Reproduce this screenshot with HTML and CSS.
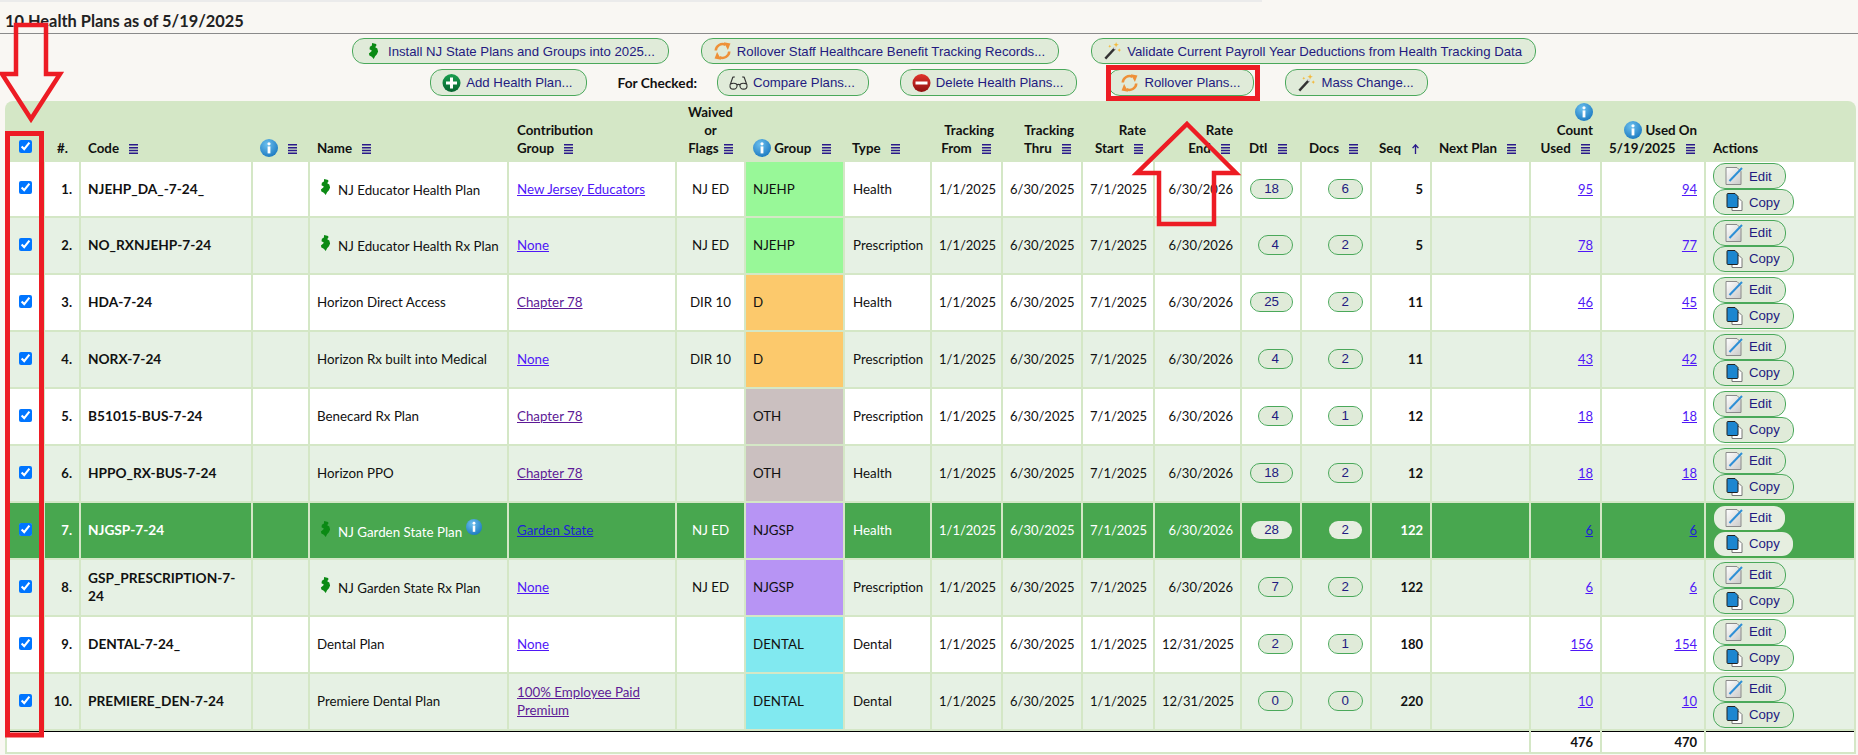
FILE: index.html
```html
<!DOCTYPE html>
<html lang="en">
<head>
<meta charset="utf-8">
<title>Health Plans</title>
<link rel="stylesheet" href="styles.css">
</head>
<body>
<svg class="defs" width="0" height="0" aria-hidden="true">
  <defs>
    <radialGradient id="gInfo" cx="40%" cy="30%" r="75%"><stop offset="0" stop-color="#6cc0ee"/><stop offset="1" stop-color="#1a78c0"/></radialGradient>
    <linearGradient id="gPlus" x1="0" y1="0" x2="0" y2="1"><stop offset="0" stop-color="#19a04f"/><stop offset="1" stop-color="#06622f"/></linearGradient>
    <linearGradient id="gMinus" x1="0" y1="0" x2="0" y2="1"><stop offset="0" stop-color="#e2342c"/><stop offset="1" stop-color="#8e1010"/></linearGradient>
    <linearGradient id="gPage" x1="0" y1="0" x2="1" y2="1"><stop offset="0" stop-color="#fff"/><stop offset="1" stop-color="#c9c9c9"/></linearGradient>
    <symbol id="i-nj" viewBox="0 0 10 16"><path d="M3.600 0 7.600.9 8 2.200 6.700 4.200 8.800 5.600 9.600 8.400 8.400 11.200 6.600 13.200 5.200 16 4 14.600 2.900 13.500.9 12.600.4 10.400 2.800 8.500 3.300 7.400 1 6.200 1.400 3.800 3.400 2.600Z" fill="#0b8a14"/></symbol>
    <symbol id="i-info" viewBox="0 0 18 18"><circle cx="9" cy="9" r="9" fill="url(#gInfo)"/><rect x="7.600" y="7.400" width="2.800" height="7" fill="#fff"/><circle cx="9" cy="4.800" r="1.600" fill="#fff"/></symbol>
    <symbol id="i-menu" viewBox="0 0 9 10"><path d="M0 .8h9M0 3.800h9M0 6.400h9M0 9.200h9" stroke="#2a1a8a" stroke-width="1.500"/></symbol>
    <symbol id="i-up" viewBox="0 0 9 12"><path d="M4.500 12V2M1 5 4.500 1 8 5" fill="none" stroke="#2a1a8a" stroke-width="1.600"/></symbol>
    <symbol id="i-roll" viewBox="0 0 20 20"><g fill="none" stroke="#ee9138" stroke-width="2.800"><path d="M2.500 9.500A7.500 7.500 0 0 1 13.500 3.200"/><path d="M17.500 10.500A7.500 7.500 0 0 1 6.500 16.800"/></g><path d="M11.500.3 18.800 1.800 16 8.800Z" fill="#ee9138"/><path d="M8.500 19.700 1.200 18.200 4 11.200Z" fill="#ee9138"/></symbol>
    <symbol id="i-wand" viewBox="0 0 20 20"><path d="M2 18.500 13 6.500" stroke="#333" stroke-width="2.600"/><path d="M11.800 7.800 13.400 6" stroke="#ddd" stroke-width="2.600"/><path d="M14 0l.8 2.200L17 3l-2.200.8L14 6l-.8-2.200L11 3l2.200-.8ZM17.500 7l.6 1.400 1.400.6-1.400.6-.6 1.400-.6-1.400L15.500 9l1.400-.6ZM7 3l.5 1.200L8.700 4.700 7.500 5.200 7 6.400 6.500 5.200 5.300 4.700 6.500 4.200Z" fill="#f3b93a"/></symbol>
    <symbol id="i-glass" viewBox="0 0 20 15"><g fill="none" stroke="#333" stroke-width="1.200"><path d="M1 10C1 8 3 7.800 5 7.800S8.500 8.500 8.500 10 7.500 14 4.500 14 1 12 1 10ZM19 10C19 8 17 7.800 15 7.800S11.500 8.500 11.500 10 12.500 14 15.500 14 19 12 19 10ZM8.500 9.500C9.500 8.800 10.500 8.800 11.500 9.500M1 10 4 1.500 6 1M19 10 16 1.500 14 1"/></g></symbol>
    <symbol id="i-plus" viewBox="0 0 18 18"><circle cx="9" cy="9" r="9" fill="url(#gPlus)"/><path d="M7.500 3.500h3v4h4v3h-4v4h-3v-4h-4v-3h4Z" fill="#fff"/></symbol>
    <symbol id="i-minus" viewBox="0 0 18 18"><circle cx="9" cy="9" r="9" fill="url(#gMinus)"/><rect x="3" y="7.500" width="12" height="3" fill="#fff"/></symbol>
    <symbol id="i-edit" viewBox="0 0 18 18"><path d="M.5.500h11l4 4v13H.500Z" fill="url(#gPage)" stroke="#8a8a8a"/><path d="M4 14 16.500 1" stroke="#2e8fd6" stroke-width="2"/></symbol>
    <symbol id="i-copy" viewBox="0 0 16 18"><path d="M5.500 5.500h7l3 3v9h-10Z" fill="#fff" stroke="#777"/><path d="M.5 1.500a1 1 0 0 1 1-1h7l3 3v10a1 1 0 0 1-1 1h-9a1 1 0 0 1-1-1Z" fill="#1c86d0" stroke="#222"/></symbol>
  </defs>
</svg>

<div class="strip"></div>
<h1 class="title">10 Health Plans as of 5/19/2025</h1>

<div class="toolbar toolbar-top">
  <button class="btn" type="button"><svg class="ic ic-nj"><use href="#i-nj"/></svg>Install NJ State Plans and Groups into 2025...</button>
  <button class="btn" type="button"><svg class="ic"><use href="#i-roll"/></svg>Rollover Staff Healthcare Benefit Tracking Records...</button>
  <button class="btn" type="button"><svg class="ic"><use href="#i-wand"/></svg>Validate Current Payroll Year Deductions from Health Tracking Data</button>
</div>
<div class="toolbar toolbar-second">
  <button class="btn btn-tall" type="button"><svg class="ic"><use href="#i-plus"/></svg>Add Health Plan...</button>
  <span class="for-checked">For Checked:</span>
  <button class="btn btn-tall" type="button"><svg class="ic"><use href="#i-glass"/></svg>Compare Plans...</button>
  <button class="btn btn-tall" type="button"><svg class="ic"><use href="#i-minus"/></svg>Delete Health Plans...</button>
  <button class="btn btn-tall" type="button"><svg class="ic"><use href="#i-roll"/></svg>Rollover Plans...</button>
  <button class="btn btn-tall" type="button"><svg class="ic"><use href="#i-wand"/></svg>Mass Change...</button>
</div>

<div class="table-wrap">
<table class="plans">
  <colgroup>
    <col class="c-check"><col class="c-num"><col class="c-code"><col class="c-info"><col class="c-name"><col class="c-contrib"><col class="c-flags"><col class="c-group"><col class="c-type"><col class="c-from"><col class="c-thru"><col class="c-start"><col class="c-end"><col class="c-dtl"><col class="c-docs"><col class="c-seq"><col class="c-next"><col class="c-count"><col class="c-used"><col class="c-actions">
  </colgroup>
  <thead>
    <tr>
      <th class="ctr"><input class="check" type="checkbox" checked></th>
      <th class="num-h">#.</th>
      <th>Code <svg class="menu"><use href="#i-menu"/></svg></th>
      <th><svg class="info"><use href="#i-info"/></svg> <svg class="menu"><use href="#i-menu"/></svg></th>
      <th>Name <svg class="menu"><use href="#i-menu"/></svg></th>
      <th class="pad8">Contribution<br>Group <svg class="menu"><use href="#i-menu"/></svg></th>
      <th class="ctr">Waived<br>or<br>Flags <svg class="menu menu-tight"><use href="#i-menu"/></svg></th>
      <th class="group-h"><svg class="info"><use href="#i-info"/></svg> Group <svg class="menu"><use href="#i-menu"/></svg></th>
      <th>Type <svg class="menu"><use href="#i-menu"/></svg></th>
      <th class="rgt">Tracking<br>From <svg class="menu menu-end"><use href="#i-menu"/></svg></th>
      <th class="rgt">Tracking<br>Thru <svg class="menu menu-end"><use href="#i-menu"/></svg></th>
      <th class="rgt">Rate<br>Start <svg class="menu menu-end"><use href="#i-menu"/></svg></th>
      <th class="rgt">Rate<br>End <svg class="menu menu-end"><use href="#i-menu"/></svg></th>
      <th>Dtl <svg class="menu"><use href="#i-menu"/></svg></th>
      <th>Docs <svg class="menu"><use href="#i-menu"/></svg></th>
      <th>Seq <svg class="menu"><use href="#i-up"/></svg></th>
      <th>Next Plan <svg class="menu"><use href="#i-menu"/></svg></th>
      <th class="rgt"><svg class="info"><use href="#i-info"/></svg><br>Count<br>Used <svg class="menu menu-end"><use href="#i-menu"/></svg></th>
      <th class="rgt"><svg class="info"><use href="#i-info"/></svg> Used On<br>5/19/2025 <svg class="menu menu-end"><use href="#i-menu"/></svg></th>
      <th>Actions</th>
    </tr>
  </thead>
  <tbody>
    <tr class="row-odd row-first">
      <td class="ctr"><input class="check" type="checkbox" checked></td><td class="rgt b">1.</td><td class="b code">NJEHP_DA_-7-24_</td><td></td>
      <td><svg class="ic-name"><use href="#i-nj"/></svg>NJ Educator Health Plan</td>
      <td class="pad8"><a href="#">New Jersey Educators</a></td><td class="ctr">NJ ED</td><td class="g-njehp">NJEHP</td><td class="pad8">Health</td>
      <td class="rgt">1/1/2025</td><td class="rgt">6/30/2025</td><td class="rgt">7/1/2025</td><td class="rgt">6/30/2026</td>
      <td class="rgt"><button class="pill" type="button">18</button></td><td class="rgt"><button class="pill" type="button">6</button></td><td class="rgt b">5</td><td></td>
      <td class="rgt"><a href="#">95</a></td><td class="rgt"><a href="#">94</a></td>
      <td class="act"><button class="btn" type="button"><svg class="ic"><use href="#i-edit"/></svg>Edit</button><button class="btn" type="button"><svg class="ic"><use href="#i-copy"/></svg>Copy</button></td>
    </tr>
    <tr class="row-even">
      <td class="ctr"><input class="check" type="checkbox" checked></td><td class="rgt b">2.</td><td class="b code">NO_RXNJEHP-7-24</td><td></td>
      <td><svg class="ic-name"><use href="#i-nj"/></svg>NJ Educator Health Rx Plan</td>
      <td class="pad8"><a href="#">None</a></td><td class="ctr">NJ ED</td><td class="g-njehp">NJEHP</td><td class="pad8">Prescription</td>
      <td class="rgt">1/1/2025</td><td class="rgt">6/30/2025</td><td class="rgt">7/1/2025</td><td class="rgt">6/30/2026</td>
      <td class="rgt"><button class="pill" type="button">4</button></td><td class="rgt"><button class="pill" type="button">2</button></td><td class="rgt b">5</td><td></td>
      <td class="rgt"><a href="#">78</a></td><td class="rgt"><a href="#">77</a></td>
      <td class="act"><button class="btn" type="button"><svg class="ic"><use href="#i-edit"/></svg>Edit</button><button class="btn" type="button"><svg class="ic"><use href="#i-copy"/></svg>Copy</button></td>
    </tr>
    <tr class="row-odd">
      <td class="ctr"><input class="check" type="checkbox" checked></td><td class="rgt b">3.</td><td class="b code">HDA-7-24</td><td></td>
      <td>Horizon Direct Access</td>
      <td class="pad8"><a class="seen" href="#">Chapter 78</a></td><td class="ctr">DIR 10</td><td class="g-d">D</td><td class="pad8">Health</td>
      <td class="rgt">1/1/2025</td><td class="rgt">6/30/2025</td><td class="rgt">7/1/2025</td><td class="rgt">6/30/2026</td>
      <td class="rgt"><button class="pill" type="button">25</button></td><td class="rgt"><button class="pill" type="button">2</button></td><td class="rgt b">11</td><td></td>
      <td class="rgt"><a href="#">46</a></td><td class="rgt"><a href="#">45</a></td>
      <td class="act"><button class="btn" type="button"><svg class="ic"><use href="#i-edit"/></svg>Edit</button><button class="btn" type="button"><svg class="ic"><use href="#i-copy"/></svg>Copy</button></td>
    </tr>
    <tr class="row-even">
      <td class="ctr"><input class="check" type="checkbox" checked></td><td class="rgt b">4.</td><td class="b code">NORX-7-24</td><td></td>
      <td>Horizon Rx built into Medical</td>
      <td class="pad8"><a href="#">None</a></td><td class="ctr">DIR 10</td><td class="g-d">D</td><td class="pad8">Prescription</td>
      <td class="rgt">1/1/2025</td><td class="rgt">6/30/2025</td><td class="rgt">7/1/2025</td><td class="rgt">6/30/2026</td>
      <td class="rgt"><button class="pill" type="button">4</button></td><td class="rgt"><button class="pill" type="button">2</button></td><td class="rgt b">11</td><td></td>
      <td class="rgt"><a href="#">43</a></td><td class="rgt"><a href="#">42</a></td>
      <td class="act"><button class="btn" type="button"><svg class="ic"><use href="#i-edit"/></svg>Edit</button><button class="btn" type="button"><svg class="ic"><use href="#i-copy"/></svg>Copy</button></td>
    </tr>
    <tr class="row-odd">
      <td class="ctr"><input class="check" type="checkbox" checked></td><td class="rgt b">5.</td><td class="b code">B51015-BUS-7-24</td><td></td>
      <td>Benecard Rx Plan</td>
      <td class="pad8"><a class="seen" href="#">Chapter 78</a></td><td></td><td class="g-oth">OTH</td><td class="pad8">Prescription</td>
      <td class="rgt">1/1/2025</td><td class="rgt">6/30/2025</td><td class="rgt">7/1/2025</td><td class="rgt">6/30/2026</td>
      <td class="rgt"><button class="pill" type="button">4</button></td><td class="rgt"><button class="pill" type="button">1</button></td><td class="rgt b">12</td><td></td>
      <td class="rgt"><a href="#">18</a></td><td class="rgt"><a href="#">18</a></td>
      <td class="act"><button class="btn" type="button"><svg class="ic"><use href="#i-edit"/></svg>Edit</button><button class="btn" type="button"><svg class="ic"><use href="#i-copy"/></svg>Copy</button></td>
    </tr>
    <tr class="row-even">
      <td class="ctr"><input class="check" type="checkbox" checked></td><td class="rgt b">6.</td><td class="b code">HPPO_RX-BUS-7-24</td><td></td>
      <td>Horizon PPO</td>
      <td class="pad8"><a class="seen" href="#">Chapter 78</a></td><td></td><td class="g-oth">OTH</td><td class="pad8">Health</td>
      <td class="rgt">1/1/2025</td><td class="rgt">6/30/2025</td><td class="rgt">7/1/2025</td><td class="rgt">6/30/2026</td>
      <td class="rgt"><button class="pill" type="button">18</button></td><td class="rgt"><button class="pill" type="button">2</button></td><td class="rgt b">12</td><td></td>
      <td class="rgt"><a href="#">18</a></td><td class="rgt"><a href="#">18</a></td>
      <td class="act"><button class="btn" type="button"><svg class="ic"><use href="#i-edit"/></svg>Edit</button><button class="btn" type="button"><svg class="ic"><use href="#i-copy"/></svg>Copy</button></td>
    </tr>
    <tr class="row-sel">
      <td class="ctr"><input class="check" type="checkbox" checked></td><td class="rgt b">7.</td><td class="b code">NJGSP-7-24</td><td></td>
      <td><svg class="ic-name"><use href="#i-nj"/></svg>NJ Garden State Plan <svg class="info info-sm"><use href="#i-info"/></svg></td>
      <td class="pad8"><a href="#">Garden State</a></td><td class="ctr">NJ ED</td><td class="g-njgsp">NJGSP</td><td class="pad8">Health</td>
      <td class="rgt">1/1/2025</td><td class="rgt">6/30/2025</td><td class="rgt">7/1/2025</td><td class="rgt">6/30/2026</td>
      <td class="rgt"><button class="pill" type="button">28</button></td><td class="rgt"><button class="pill" type="button">2</button></td><td class="rgt b">122</td><td></td>
      <td class="rgt"><a href="#">6</a></td><td class="rgt"><a href="#">6</a></td>
      <td class="act"><button class="btn" type="button"><svg class="ic"><use href="#i-edit"/></svg>Edit</button><button class="btn" type="button"><svg class="ic"><use href="#i-copy"/></svg>Copy</button></td>
    </tr>
    <tr class="row-even">
      <td class="ctr"><input class="check" type="checkbox" checked></td><td class="rgt b">8.</td><td class="b code">GSP_PRESCRIPTION-7-24</td><td></td>
      <td><svg class="ic-name"><use href="#i-nj"/></svg>NJ Garden State Rx Plan</td>
      <td class="pad8"><a href="#">None</a></td><td class="ctr">NJ ED</td><td class="g-njgsp">NJGSP</td><td class="pad8">Prescription</td>
      <td class="rgt">1/1/2025</td><td class="rgt">6/30/2025</td><td class="rgt">7/1/2025</td><td class="rgt">6/30/2026</td>
      <td class="rgt"><button class="pill" type="button">7</button></td><td class="rgt"><button class="pill" type="button">2</button></td><td class="rgt b">122</td><td></td>
      <td class="rgt"><a href="#">6</a></td><td class="rgt"><a href="#">6</a></td>
      <td class="act"><button class="btn" type="button"><svg class="ic"><use href="#i-edit"/></svg>Edit</button><button class="btn" type="button"><svg class="ic"><use href="#i-copy"/></svg>Copy</button></td>
    </tr>
    <tr class="row-odd">
      <td class="ctr"><input class="check" type="checkbox" checked></td><td class="rgt b">9.</td><td class="b code">DENTAL-7-24_</td><td></td>
      <td>Dental Plan</td>
      <td class="pad8"><a href="#">None</a></td><td></td><td class="g-dental">DENTAL</td><td class="pad8">Dental</td>
      <td class="rgt">1/1/2025</td><td class="rgt">6/30/2025</td><td class="rgt">1/1/2025</td><td class="rgt">12/31/2025</td>
      <td class="rgt"><button class="pill" type="button">2</button></td><td class="rgt"><button class="pill" type="button">1</button></td><td class="rgt b">180</td><td></td>
      <td class="rgt"><a href="#">156</a></td><td class="rgt"><a href="#">154</a></td>
      <td class="act"><button class="btn" type="button"><svg class="ic"><use href="#i-edit"/></svg>Edit</button><button class="btn" type="button"><svg class="ic"><use href="#i-copy"/></svg>Copy</button></td>
    </tr>
    <tr class="row-even">
      <td class="ctr"><input class="check" type="checkbox" checked></td><td class="rgt b">10.</td><td class="b code">PREMIERE_DEN-7-24</td><td></td>
      <td>Premiere Dental Plan</td>
      <td class="pad8"><a class="seen" href="#">100% Employee Paid Premium</a></td><td></td><td class="g-dental">DENTAL</td><td class="pad8">Dental</td>
      <td class="rgt">1/1/2025</td><td class="rgt">6/30/2025</td><td class="rgt">1/1/2025</td><td class="rgt">12/31/2025</td>
      <td class="rgt"><button class="pill" type="button">0</button></td><td class="rgt"><button class="pill" type="button">0</button></td><td class="rgt b">220</td><td></td>
      <td class="rgt"><a href="#">10</a></td><td class="rgt"><a href="#">10</a></td>
      <td class="act"><button class="btn" type="button"><svg class="ic"><use href="#i-edit"/></svg>Edit</button><button class="btn" type="button"><svg class="ic"><use href="#i-copy"/></svg>Copy</button></td>
    </tr>
  </tbody>
  <tfoot>
    <tr>
      <td colspan="17"></td>
      <td class="rgt b">476</td>
      <td class="rgt b">470</td>
      <td></td>
    </tr>
  </tfoot>
</table>
</div>

<svg class="callouts" viewBox="0 0 1858 755" aria-hidden="true">
  <g fill="none" stroke="#ed1c24">
    <rect x="7.500" y="133.500" width="34" height="601.500" stroke-width="5"/>
    <rect x="1108.500" y="67.500" width="149" height="31" stroke-width="5"/>
    <path d="M16 25H46V74H60L31 119 2 74H16Z" stroke-width="4.500"/>
    <path d="M1187 124 1236 173H1214V224H1159V173H1137Z" stroke-width="4.500"/>
  </g>
</svg>
</body>
</html>
```
FILE: styles.css
```css
* { box-sizing: border-box; }
html, body { margin: 0; padding: 0; }
body {
  position: relative;
  width: 1858px;
  height: 755px;
  overflow: hidden;
  background: #f9f7f3;
  font-family: "Lato", "Liberation Sans", sans-serif;
  font-size: 13px;
  color: #111;
}
.defs { position: absolute; }
.strip { height: 2px; width: 1262px; background: #ebebeb; }
.title {
  margin: 0;
  height: 32px;
  padding: 10px 0 0 5px;
  font-size: 16.400px;
  line-height: 18px;
  font-weight: 700;
  color: #222;
  border-bottom: 1px solid #8a8a8a;
}
.toolbar { display: flex; justify-content: center; align-items: center; }
.toolbar-top { height: 26px; margin-top: 4px; gap: 32px; padding-left: 30px; }
.toolbar-second { height: 27px; margin-top: 5px; gap: 31px; }
.for-checked { font-weight: 700; font-size: 13.700px; margin-right: -11px; }

.btn {
  display: inline-flex;
  align-items: center;
  height: 26px;
  padding: 0 13px 0 11px;
  border: 1px solid #4aa85a;
  border-radius: 12px;
  background: #e0ebd9;
  background-clip: padding-box;
  font-family: "Liberation Sans", Arial, sans-serif;
  font-size: 13.200px;
  color: #231a80;
  white-space: nowrap;
}
.btn-tall { height: 27px; }
.ic { width: 19px; height: 18px; margin-right: 5px; flex: none; }
.ic-nj { width: 19px; height: 16px; }

.table-wrap { margin: 5px 2px 0 5px; }
.plans {
  table-layout: fixed;
  width: 1851px;
  border-collapse: separate;
  border-spacing: 2px;
  background: #d4e7c6;
  border-radius: 8px 8px 0 0;
}
.c-check { width: 36px; } .c-num { width: 34px; } .c-code { width: 170px; } .c-info { width: 55px; }
.c-name { width: 197px; } .c-contrib { width: 166px; } .c-flags { width: 67px; } .c-group { width: 97px; }
.c-type { width: 85px; } .c-from { width: 69px; } .c-thru { width: 78px; } .c-start { width: 70px; }
.c-end { width: 85px; } .c-dtl { width: 58px; } .c-docs { width: 68px; } .c-seq { width: 58px; }
.c-next { width: 97px; } .c-count { width: 69px; } .c-used { width: 102px; } .c-actions { width: 148px; }

th {
  height: 57px;
  padding: 0 7px 3px 7px;
  vertical-align: bottom;
  text-align: left;
  font-weight: 700;
  font-size: 13.330px;
  line-height: 18px;
  white-space: nowrap;
  color: #111;
}
td {
  height: 55px;
  padding: 0 7px 1px;
  vertical-align: middle;
  font-size: 13.330px;
  line-height: 18px;
}
td.rgt { font-size: 13px; }
td.code { font-size: 13.700px; }
td.pad8, th.pad8 { padding-left: 8px; }
.row-first td { height: 54px; }
.row-odd td { background: #fff; }
.row-even td { background: #e6f1e4; }
.row-sel td { background: #48a74f; color: #fff; }
.b { font-weight: 700; }
.rgt { text-align: right; }
.ctr { text-align: center; }
th.ctr { padding-left: 0; padding-right: 0; }
td.ctr { padding-left: 0; padding-right: 0; }
.num-h { padding-left: 12px; padding-right: 0; }

.menu { width: 9px; height: 10px; margin-left: 7px; vertical-align: -1px; }
.menu-tight { margin-left: 2px; }
.menu-end { margin-right: 3px; }
.info { width: 18px; height: 18px; vertical-align: -4px; }
.info-sm { width: 16px; height: 16px; vertical-align: 2px; margin-left: 0; }
.group-h { white-space: nowrap; }
.ic-name { width: 11px; height: 16px; margin: 0 7px 0 3px; vertical-align: baseline; }

.check { width: 13px; height: 13px; margin: 0; vertical-align: middle; }
thead .check { margin-bottom: 4px; }
tbody .check { display: block; margin: 0 auto 2px; }

a { color: #4f17f7; text-decoration: underline; }
a.seen { color: #5d1a96; }
.row-sel a { color: #1f1fd6; }

.pill {
  height: 20px;
  padding: 0 13px;
  border: 1px solid #4aa85a;
  border-radius: 10px;
  background: #e0ebd9;
  background-clip: padding-box;
  font-family: "Liberation Sans", Arial, sans-serif;
  font-size: 13.333px;
  line-height: 18px;
  color: #231a80;
  vertical-align: middle;
}
.row-sel .pill, .row-sel .btn { border-color: transparent; background-color: #e6eee0; }

td.act { padding: 0 0 0 7px; }
.act .btn { display: flex; width: max-content; }

.g-njehp { background: #98f898 !important; }
.g-d { background: #fcc96c !important; }
.g-oth { background: #cbc0c0 !important; }
.g-njgsp { background: #b794f4 !important; }
.g-dental { background: #81e9f0 !important; }
.row-sel td[class^="g-"] { color: #111; }

tfoot td {
  height: 21px;
  padding: 0 7px;
  background: #fff;
  border-top: 1px solid #000;
  line-height: 18px;
}

.callouts {
  position: absolute;
  left: 0;
  top: 0;
  width: 1858px;
  height: 755px;
  pointer-events: none;
}
```
